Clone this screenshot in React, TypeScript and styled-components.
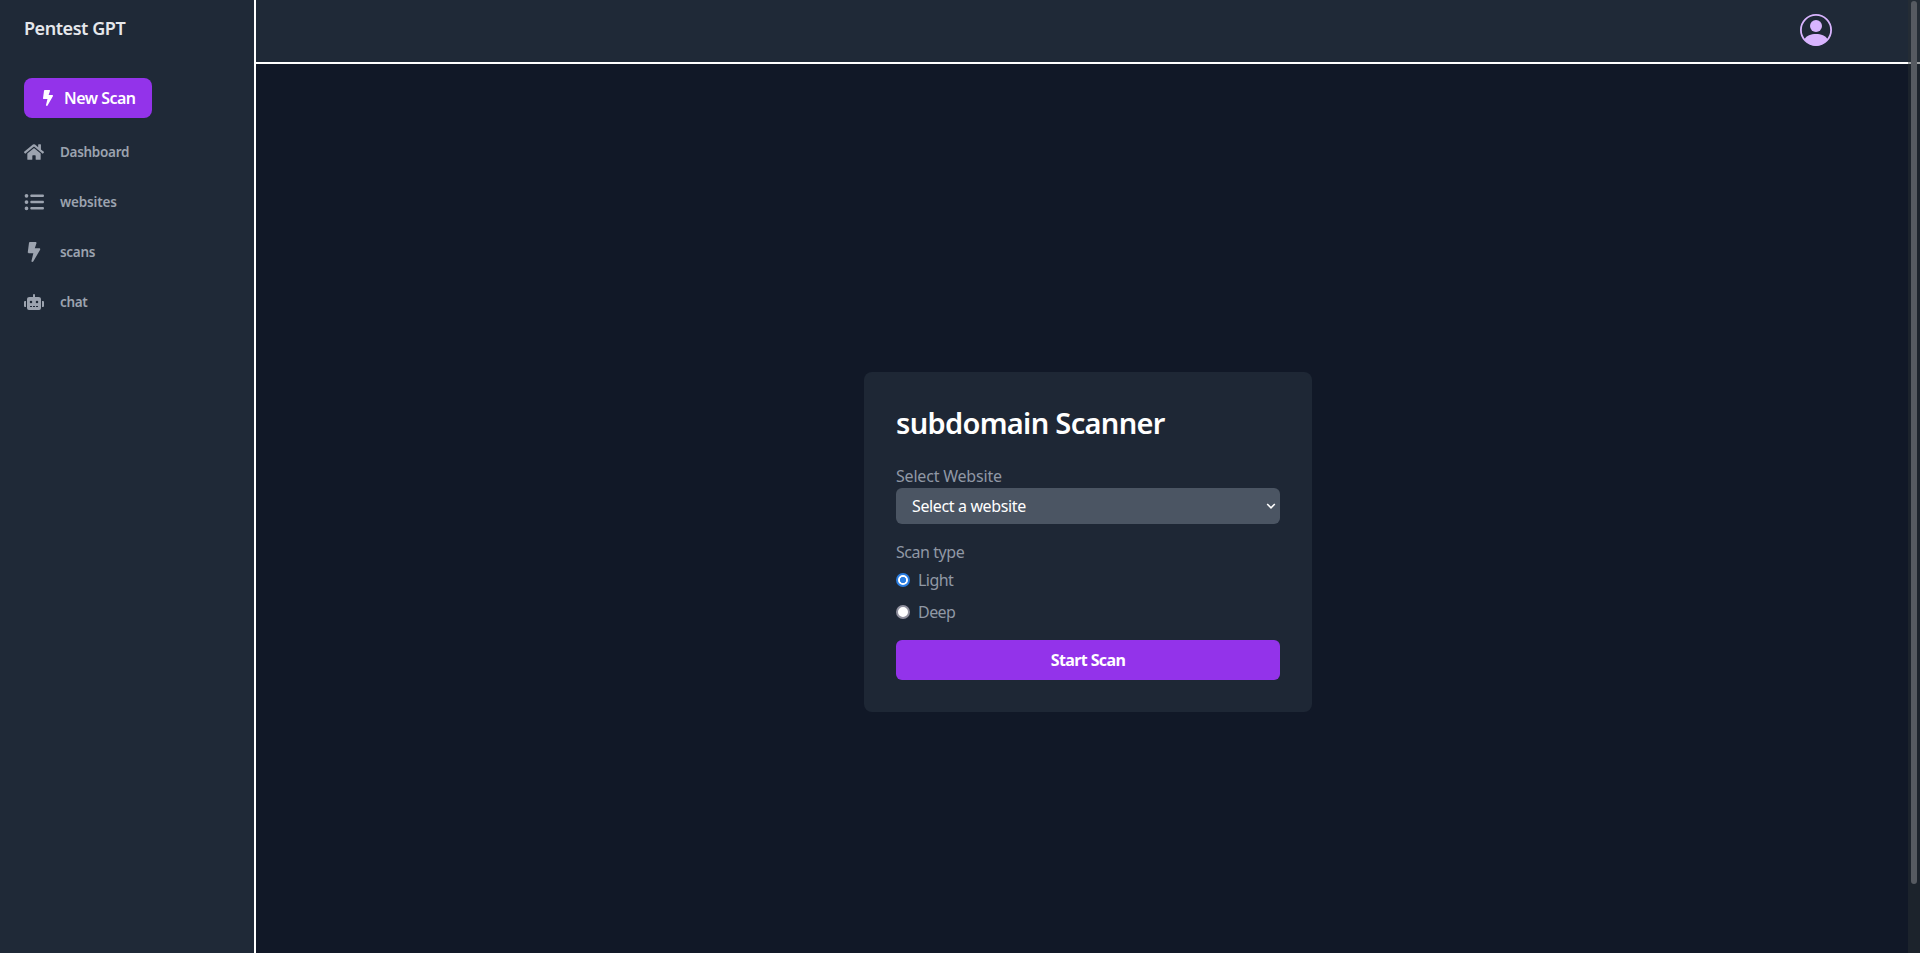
import React, { useState } from "react";
import styled, { createGlobalStyle } from "styled-components";
import { FaBolt, FaHome, FaRobot } from "react-icons/fa";
import { FaListUl } from "react-icons/fa6";

const GlobalStyle = createGlobalStyle`
  *, *::before, *::after { box-sizing: border-box; }
  body {
    margin: 0;
    background: #111827;
    font-family: "Noto Sans", "Open Sans", sans-serif;
    font-size: 16px;
    line-height: 24px;
    overflow: hidden;
  }
  button, select { font: inherit; }
`;

const Shell = styled.div`
  display: flex;
  height: 100vh;
`;

const Sidebar = styled.aside`
  flex: 0 0 256px;
  border-right: 2px solid #ffffff;
  background: #1f2937;
  padding: 14px 24px;
`;

const Brand = styled.div`
  color: #e5e7eb;
  font-size: 18px;
  font-weight: 600;
  line-height: 28px;
  letter-spacing: -0.45px;
  white-space: nowrap;
`;

const NewScan = styled.button`
  display: flex;
  align-items: center;
  gap: 8px;
  width: 128px;
  height: 40px;
  margin-top: 36px;
  padding: 0 0 0 16px;
  border: 0;
  border-radius: 8px;
  background: #9333ea;
  color: #ffffff;
  font-weight: 600;
  letter-spacing: -0.5px;
  white-space: nowrap;
`;

const Nav = styled.nav`
  display: flex;
  flex-direction: column;
  gap: 10px;
  margin-top: 14px;
`;

const NavItem = styled.a`
  display: flex;
  align-items: center;
  gap: 16px;
  height: 40px;
  color: #9ca3af;
  font-size: 13.5px;
  font-weight: 650;
  letter-spacing: ${(p: { $track: number }) => p.$track}px;
`;

const Main = styled.div`
  flex: 1;
  display: flex;
  flex-direction: column;
`;

const Header = styled.header`
  display: flex;
  justify-content: flex-end;
  height: 64px;
  padding: 14px 88px 0 0;
  border-bottom: 2px solid #ffffff;
  background: #1f2937;
`;

const Content = styled.main`
  flex: 1;
  display: flex;
  align-items: center;
  justify-content: center;
  padding-top: 66px;
`;

const Card = styled.form`
  width: 448px;
  height: 340px;
  padding: 33px 32px 32px;
  border-radius: 8px;
  background: #1e2735;
`;

const Title = styled.h1`
  margin: 0 0 23px;
  color: #ffffff;
  font-size: 29px;
  font-weight: 600;
  line-height: 36px;
  letter-spacing: -0.67px;
  white-space: nowrap;
`;

const Label = styled.div`
  color: #9098a5;
  letter-spacing: ${(p: { $track: number }) => p.$track}px;
`;

const SelectBox = styled.div`
  display: grid;
  align-items: center;
  margin-bottom: 16px;
  > * { grid-area: 1 / 1; }
  > svg { justify-self: end; margin-right: 4px; pointer-events: none; }
`;

const Select = styled.select`
  appearance: none;
  width: 100%;
  height: 36px;
  padding: 0 16px;
  border: 0;
  border-radius: 6px;
  background: #4b5563;
  color: #ffffff;
  letter-spacing: -0.37px;
`;

const Option = styled.label`
  display: flex;
  align-items: center;
  gap: 8px;
  height: 24px;
  margin-top: ${(p: { $gap: number }) => p.$gap}px;
  color: #9098a5;
  letter-spacing: -0.55px;
`;

const Radio = styled.input`
  appearance: none;
  width: 14px;
  height: 14px;
  margin: 0;
  border: 2px solid #8f8f9d;
  border-radius: 50%;
  background: #ffffff;
  &:checked {
    border-color: #2a7de1;
    background: radial-gradient(circle, #2a7de1 2.8px, #ffffff 3.5px);
  }
`;

const StartButton = styled.button`
  display: block;
  width: 100%;
  height: 40px;
  margin-top: 16px;
  border: 0;
  border-radius: 6px;
  background: #9333ea;
  color: #ffffff;
  font-weight: 700;
  letter-spacing: -0.62px;
`;

const ScrollTrack = styled.div`
  position: fixed;
  top: 0;
  right: 0;
  width: 12px;
  height: 100vh;
  padding: 1px 3px;
  background: rgba(43, 48, 50, 0.45);
`;

const ScrollThumb = styled.div`
  height: 883px;
  border-radius: 3px;
  background: #565a61;
`;

const links = [
  { label: "Dashboard", Icon: FaHome, track: -0.3 },
  { label: "websites", Icon: FaListUl, track: -0.15 },
  { label: "scans", Icon: FaBolt, track: -0.3 },
  { label: "chat", Icon: FaRobot, track: -0.35 },
];

export default function App() {
  const [type, setType] = useState("Light");
  return (
    <>
      <GlobalStyle />
      <Shell>
        <Sidebar>
          <Brand>Pentest GPT</Brand>
          <NewScan><FaBolt size={16} />New Scan</NewScan>
          <Nav>
            {links.map(({ label, Icon, track }) => (
              <NavItem key={label} $track={track}><Icon size={20} />{label}</NavItem>
            ))}
          </Nav>
        </Sidebar>
        <Main>
          <Header>
            <svg width="32" height="32" viewBox="0 0 32 32" fill="#d8b4fe">
              <circle cx="16" cy="16" r="15.1" fill="none" stroke="#d8b4fe" strokeWidth="1.8" />
              <circle cx="16" cy="12" r="6" />
              <path d="M4.4 25.2C6.6 21.6 10.800 20 16 20s9.400 1.600 11.600 5.200C25 29 20.900 31.500 16 31.500S7 29 4.400 25.200Z" />
            </svg>
          </Header>
          <Content>
            <Card>
              <Title>subdomain Scanner</Title>
              <Label $track={-0.2}>Select Website</Label>
              <SelectBox>
                <Select defaultValue="">
                  <option value="">Select a website</option>
                </Select>
                <svg width="10" height="10" viewBox="0 0 10 10" fill="none" stroke="#ffffff" strokeWidth="1.6">
                  <path d="M1.200 3 5 6.800 8.800 3" />
                </svg>
              </SelectBox>
              <Label $track={-0.45}>Scan type</Label>
              {["Light", "Deep"].map((name, i) => (
                <Option key={name} $gap={i === 0 ? 4 : 8}>
                  <Radio type="radio" name="type" checked={type === name} onChange={() => setType(name)} />
                  {name}
                </Option>
              ))}
              <StartButton type="button">Start Scan</StartButton>
            </Card>
          </Content>
        </Main>
      </Shell>
      <ScrollTrack><ScrollThumb /></ScrollTrack>
    </>
  );
}
